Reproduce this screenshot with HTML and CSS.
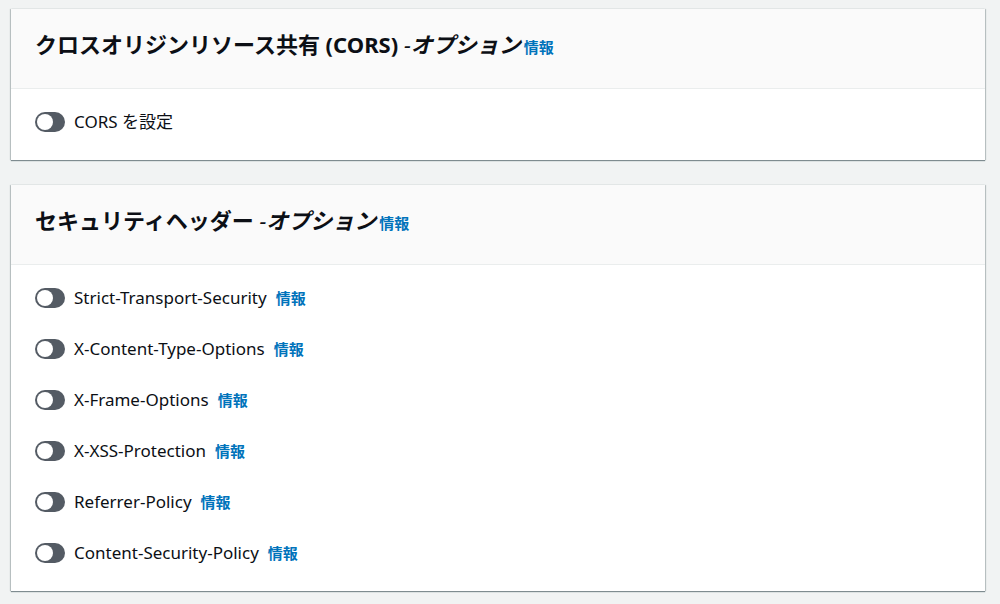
FILE: index.html
```
<!DOCTYPE html>
<html lang="ja">

<head>
  <meta charset="UTF-8">
  <meta name="viewport" content="width=device-width, initial-scale=1.0">

  <title>レスポンスヘッダーポリシー</title>
  <link rel="stylesheet" href="styles.css">
</head>

<body>
  <section class="card">
    <div class="card-header">
      <h2>クロスオリジンリソース共有 (CORS) <em><span class="dash">-</span>オプション</em></h2>
      <a class="info" href="#">情報</a>
    </div>
    <div class="card-body">
      <div class="row">
        <input type="checkbox" class="toggle" id="cors">
        <label for="cors">CORS を設定</label>
      </div>
    </div>
  </section>

  <section class="card">
    <div class="card-header">
      <h2>セキュリティヘッダー <em><span class="dash">-</span>オプション</em></h2>
      <a class="info" href="#">情報</a>
    </div>
    <div class="card-body">
      <div class="row">
        <input type="checkbox" class="toggle" id="sts">
        <label for="sts">Strict-Transport-Security</label>
        <a class="info" href="#">情報</a>
      </div>
      <div class="row">
        <input type="checkbox" class="toggle" id="content-type">
        <label for="content-type">X-Content-Type-Options</label>
        <a class="info" href="#">情報</a>
      </div>
      <div class="row">
        <input type="checkbox" class="toggle" id="frame">
        <label for="frame">X-Frame-Options</label>
        <a class="info" href="#">情報</a>
      </div>
      <div class="row">
        <input type="checkbox" class="toggle" id="xss">
        <label for="xss">X-XSS-Protection</label>
        <a class="info" href="#">情報</a>
      </div>
      <div class="row">
        <input type="checkbox" class="toggle" id="referrer">
        <label for="referrer">Referrer-Policy</label>
        <a class="info" href="#">情報</a>
      </div>
      <div class="row">
        <input type="checkbox" class="toggle" id="csp">
        <label for="csp">Content-Security-Policy</label>
        <a class="info" href="#">情報</a>
      </div>
    </div>
  </section>
</body>

</html>
```
FILE: styles.css
```
* {
  box-sizing: border-box;
}

body {
  margin: 0;
  padding: 9px 15px 12px 11px;
  background-color: #f1f3f3;
  color: #0c0f15;
  font-family: "Noto Sans", "Noto Sans CJK JP", sans-serif;
  font-size: 17px;
  line-height: 26px;
}

.card {
  margin-bottom: 25px;
  background-color: #fff;
  box-shadow: 0 1px 1px #7f8c90, 1px 0 1px #c3c9ca, -1px 0 1px #c3c9ca;
}

.card:last-child {
  margin-bottom: 0;
}

.card-header {
  display: flex;
  align-items: baseline;
  gap: 3px;
  height: 80px;
  padding: 19px 24px;
  background-color: #fafafa;
  border-bottom: 1px solid #eaeded;
}

h2 {
  margin: 0;
  font-size: 22px;
  line-height: 32px;
}

.dash {
  font-weight: normal;
}

.card-body {
  display: flex;
  flex-direction: column;
  gap: 25px;
  padding: 20px 24px 25px;
}

.row {
  display: flex;
  align-items: center;
}

.row label {
  margin: 0 9px;
}

.info {
  color: #0073bb;
  font-size: 15px;
  font-weight: bold;
  text-decoration: none;
}

.toggle {
  appearance: none;
  display: flex;
  width: 30px;
  height: 20px;
  margin: 0;
  padding: 2px;
  border-radius: 10px;
  background-color: #545b64;
  cursor: pointer;
}

.toggle::before {
  content: "";
  width: 16px;
  height: 16px;
  border-radius: 50%;
  background-color: #fff;
}

.toggle:checked {
  justify-content: flex-end;
  background-color: #0073bb;
}
```
